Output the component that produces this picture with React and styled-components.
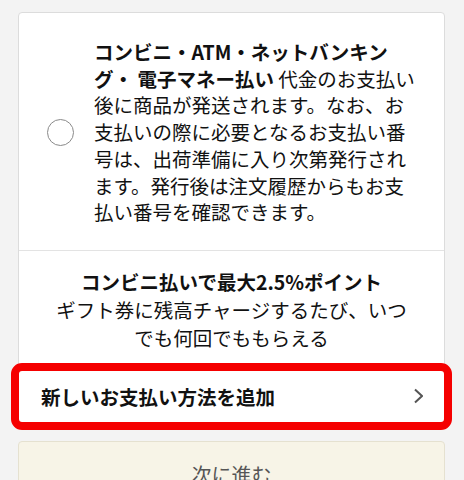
import React from 'react';
import styled, { createGlobalStyle } from 'styled-components';

const GlobalStyle = createGlobalStyle`
  html, body {
    margin: 0;
    padding: 0;
    background: #f3f3f3;
  }
  body {
    font-family: "Noto Sans CJK JP", "Noto Sans", sans-serif;
    color: #111;
  }
`;

const Page = styled.div`
  padding: 12px 19px 0 18px;
`;

const Card = styled.div`
  background: #fff;
  border: 1px solid #dcdcdc;
  border-radius: 4px;
`;

const OptionRow = styled.div`
  display: flex;
  align-items: center;
  gap: 20px;
  padding: 26px 30px 24px 28px;
  border-bottom: 1px solid #e3e3e3;
`;

const Radio = styled.span`
  flex: none;
  width: 27px;
  height: 27px;
  box-sizing: border-box;
  border: 1.5px solid #8a8a8a;
  border-radius: 50%;
`;

const OptionText = styled.div`
  font-size: 19.5px;
  line-height: 26.7px;
  white-space: nowrap;
`;

const Strong = styled.b`
  font-weight: 700;
`;

const Promo = styled.div`
  padding: 17px 10px 18px;
  text-align: center;
  font-size: 19.5px;
  line-height: 28px;
  white-space: nowrap;
  border-bottom: 1px solid #e3e3e3;
`;

const AddRow = styled.div`
  display: flex;
  align-items: center;
  justify-content: space-between;
  height: 51px;
  padding: 0 21px 0 22px;
  background: #fff;
  border-radius: 3px;
  outline: 8px solid #f50000;
  font-size: 19.5px;
  font-weight: 700;
`;

const Chevron = () => (
  <svg width="10" height="16" viewBox="0 0 10 16">
    <polyline points="2,1.5 9,8 2,14.5" fill="none" stroke="#555" strokeWidth="2" />
  </svg>
);

const NextButton = styled.div`
  margin-top: 18px;
  height: 64px;
  box-sizing: border-box;
  padding-top: 18px;
  background: #f7f4e7;
  border: 1px solid #e5e1d0;
  border-radius: 4px;
  text-align: center;
  font-size: 20px;
  color: #555;
`;

const App = () => {
  return (
    <Page>
      <GlobalStyle />
      <Card>
        <OptionRow>
          <Radio />
          <OptionText>
            <Strong>コンビニ・ATM・ネットバンキン</Strong><br />
            <Strong>グ・ 電子マネー払い</Strong> 代金のお支払い<br />
            後に商品が発送されます。なお、お<br />
            支払いの際に必要となるお支払い番<br />
            号は、出荷準備に入り次第発行され<br />
            ます。発行後は注文履歴からもお支<br />
            払い番号を確認できます。
          </OptionText>
        </OptionRow>
        <Promo>
          <Strong>コンビニ払いで最大2.5%ポイント</Strong><br />
          ギフト券に残高チャージするたび、いつ<br />
          でも何回でももらえる
        </Promo>
        <AddRow>
          新しいお支払い方法を追加
          <Chevron />
        </AddRow>
      </Card>
      <NextButton>次に進む</NextButton>
    </Page>
  );
};

export default App;
